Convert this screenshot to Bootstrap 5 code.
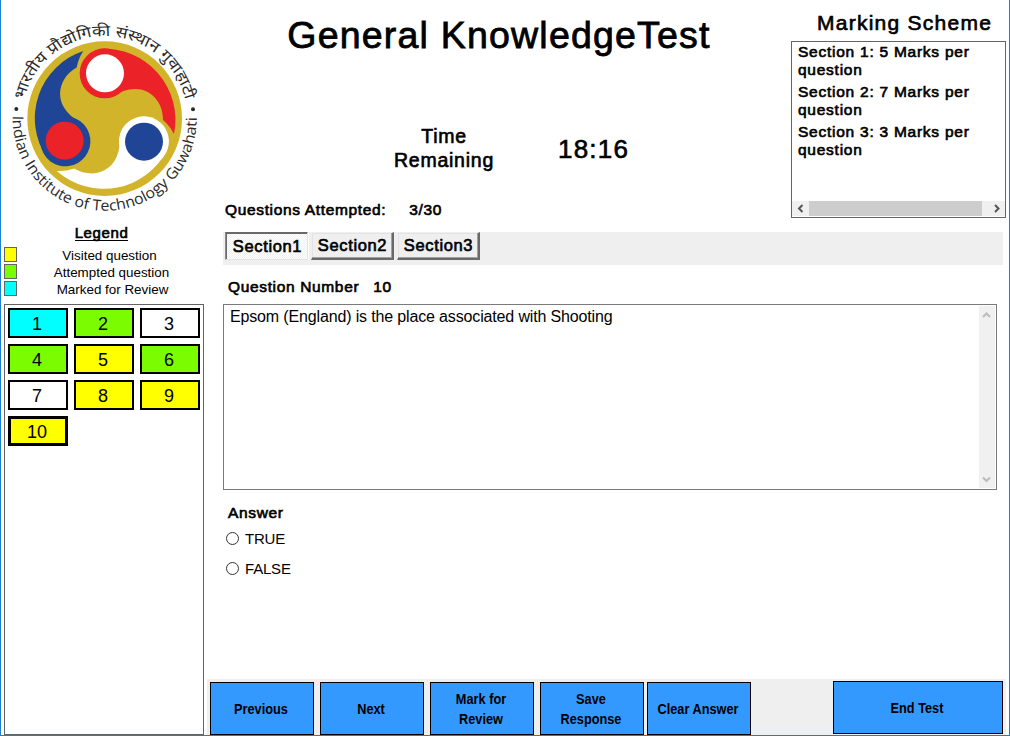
<!DOCTYPE html>
<html lang="en">
<head>
<meta charset="utf-8">
<title>General Knowledge Test</title>
<link href="https://cdn.jsdelivr.net/npm/bootstrap@5.3.0/dist/css/bootstrap.min.css" rel="stylesheet">
<style>
body{font-family:"Liberation Sans",Arial,sans-serif;color:#000;background:#fff;line-height:1}
.app{width:1010px;height:736px;border:solid #1c7fd0;border-width:0 1px 1px;overflow:hidden}
.side{width:204px;padding-left:3px}
.logo{width:204px;height:220px;margin-left:-3px;display:block}
.strong-ish{-webkit-text-stroke:.65px #000;letter-spacing:.65px}
.legend-title{font-size:15px;line-height:17px;height:27px;padding-top:4px;width:195px;letter-spacing:.6px}
.legend-title span{border-bottom:1px solid #000;height:17px;display:inline-block}
.legend-row{height:15px;margin-bottom:2px;width:200px}
.swatch{width:13px;height:15px;border:1px solid #646464}
.legend-row .txt{font-size:13.4px;padding:2px 0 0 2px}
.y{background:#ff0}.g{background:#7cfc00}.c{background:#0ff}.w{background:#fff}
.palette{border:1px solid #646464;margin-top:6px;height:431px;width:200px;padding:3px}
.palette-grid{display:grid;grid-template-columns:repeat(3,60px);gap:6px}
.q{height:30px;border:2px solid #000;border-radius:0;font-size:18px;padding:1px 2px 0 0;line-height:26px;color:#000}
.q.now{border-width:3px;line-height:24px}
.pane{width:804px}
.exam-title{font-size:37.5px;line-height:40px;height:124px;padding:15px 0 0 2px;letter-spacing:1.2px;-webkit-text-stroke:.8px #000}
.top-left{width:586px;height:232px}
.clock-row{height:77px;padding-left:179px}
.timer-label{font-size:19.5px;line-height:24px;text-align:center;width:120px;letter-spacing:.75px}
.timer{font-size:26px;letter-spacing:1.2px;padding:12px 0 0 54px}
.t15{font-size:15px;line-height:17px}
.t15.strong-ish{font-size:15.5px}
.attempted{gap:23px;padding-left:20px}
.marks{width:215px}
.marks-title{font-size:21px;line-height:24px;padding:11px 0 0 26px;height:41px;letter-spacing:1.25px}
.marks-box{height:177px;border:1px solid #646464}
.marks-list{height:159px;padding:1px 0 0 6px;line-height:18px;font-size:15.5px;letter-spacing:.75px;white-space:nowrap}
.marks-list li{margin-bottom:4px}
.hbar{height:15px;background:#f0f0f0}
.thumb{width:173px;background:#cdcdcd}
.arrow{fill:none;stroke-width:2}
.tabs{margin-left:18px;width:780px;height:33px;background:#efefef;padding-left:2px;gap:3px}
.tab{width:83px;height:28px;border:solid;border-width:1px 2px 2px 1px;border-color:#efefef #696969 #696969 #efefef;box-shadow:inset -1px -1px #a0a0a0,inset 1px 1px #e3e3e3;background:#efefef;font-size:16.5px;line-height:25px;padding:0 0 0 1px;border-radius:0;color:#000;white-space:nowrap}
.tab.on{border-width:1px;border-color:#696969 #e3e3e3 #e3e3e3 #8a8a8a;background:repeating-conic-gradient(#fff 0 25%,#f0f0f0 0 50%) 0 0/2px 2px;box-shadow:inset 1px 1px #696969,1px 0 #fff;padding:1px 0 0 2px}
.qnum{margin:13px 0 9px 23px;gap:14px}
.qbox{margin-left:18px;width:774px;height:186px;border:1px solid #7a7a7a;padding:1px}
.qtext{font-size:16px;line-height:18px;padding:2px 0 0 5px;letter-spacing:-.15px}
.vbar{width:16px;background:#f0f0f0}
.answer{margin:14px 0 0 23px}
.choices{padding-top:2px}
.choice{height:30px;margin-left:21px;gap:6px;letter-spacing:-.2px}
.radio-dot{width:13px;height:13px;border:1px solid #333;border-radius:50%}
.foot{margin-left:2px;width:799px;height:56px;background:#efefef;padding:2px 3px 0;gap:6px}
.act{width:104px;height:53px;background:#39f;border:1px solid #000;border-radius:0;padding:0 2px 0 0;font-weight:700;font-size:14px;line-height:20px;color:#000;margin-top:1px;white-space:nowrap}
.act span{display:block;transform:scaleX(.91)}
.act.clear{margin-left:-3px}
.act.end{width:170px;margin:0 0 0 auto}
</style>
</head>
<body>
<div class="app d-flex">
<aside class="side flex-shrink-0">
<svg class="logo" viewBox="3 0 612 660">
<defs>
<path id="top" d="M66,356 A248,248 0 0 1 562,356"/>
<path id="bot" d="M38.2,346 A276,276 0 1 0 589.8,346"/>
<g id="lobe"><circle cx="314" cy="220" r="75"/><path d="M300,147 A213,213 0 0 1 522,402 Q510,378 489,360 C490,305 450,266 405,267 Q370,268 345,287Z"/></g>
</defs>
<circle cx="314" cy="356" r="232" fill="#d1b42a"/>
<use href="#lobe" fill="#eb2228"/><use href="#lobe" fill="#204597" transform="rotate(-120 314 356)"/><use href="#lobe" fill="#fff" transform="rotate(120 314 356)"/>
<circle cx="315" cy="220" r="57" fill="#fff"/><circle cx="194" cy="422" r="57" fill="#eb2228"/><circle cx="432" cy="425" r="57" fill="#204597"/>
<g fill="#2a2a2a"><circle cx="49" cy="327" r="6"/><circle cx="579" cy="328" r="6"/>
<text font-size="46" font-family="'Noto Sans Devanagari','Noto Sans',sans-serif"><textPath href="#top" startOffset="56" textLength="666" lengthAdjust="spacingAndGlyphs">भारतीय प्रौद्योगिकी संस्थान गुवाहाटी</textPath></text>
<text font-size="45" font-family="'Open Sans',sans-serif"><textPath href="#bot" textLength="881" startOffset="1" lengthAdjust="spacingAndGlyphs">Indian Institute of Technology Guwahati</textPath></text></g>
</svg>
<div class="legend-title text-center strong-ish"><span>Legend</span></div>
<div class="legend-row d-flex"><i class="swatch y"></i><span class="txt flex-fill text-center pe-1">Visited question</span></div>
<div class="legend-row d-flex"><i class="swatch g"></i><span class="txt flex-fill text-center">Attempted question</span></div>
<div class="legend-row d-flex"><i class="swatch c"></i><span class="txt flex-fill text-center ps-1">Marked for Review</span></div>
<div class="palette mt-2"><div class="palette-grid">
<button class="q c">1</button><button class="q g">2</button><button class="q w">3</button><button class="q g">4</button><button class="q y">5</button><button class="q g">6</button><button class="q w">7</button><button class="q y">8</button><button class="q y">9</button><button class="q y now">10</button>
</div></div>
</aside>
<main class="pane d-flex flex-column">
<header class="d-flex">
<div class="top-left">
<h1 class="exam-title text-center m-0 fw-normal">General KnowledgeTest</h1>
<div class="clock-row d-flex strong-ish"><div class="timer-label">Time<br>Remaining</div><div class="timer">18:16</div></div>
<div class="attempted t15 strong-ish d-flex"><span>Questions Attempted:</span><span>3/30</span></div>
</div>
<section class="marks strong-ish"><div class="marks-title">Marking Scheme</div>
<div class="marks-box"><ul class="marks-list list-unstyled m-0"><li>Section 1: 5 Marks per<br>question</li><li>Section 2: 7 Marks per<br>question</li><li>Section 3: 3 Marks per<br>question</li></ul>
<div class="hbar d-flex justify-content-between"><svg class="arrow" width="17" height="15" stroke="#555"><path d="M10.5 4L7 7.5L10.5 11"/></svg><div class="thumb"></div><svg class="arrow" width="23" height="15" stroke="#555"><path d="M13 4L16.500 7.500L13 11"/></svg></div></div></section>
</header>
<nav class="tabs d-flex"><button class="tab on strong-ish">Section1</button><button class="tab strong-ish">Section2</button><button class="tab strong-ish">Section3</button></nav>
<div class="qnum t15 strong-ish d-flex"><span>Question Number</span><span>10</span></div>
<div class="qbox d-flex"><div class="qtext flex-fill">Epsom (England) is the place associated with Shooting</div>
<div class="vbar d-flex flex-column justify-content-between"><svg class="arrow" width="16" height="17" stroke="#bbb"><path d="M4 11L7.500 7.500L11 11"/></svg><svg class="arrow" width="16" height="17" stroke="#bbb"><path d="M4 6.500L7.500 10L11 6.500"/></svg></div></div>
<div class="answer t15 strong-ish">Answer</div>
<div class="choices"><div class="choice t15 d-flex align-items-center"><i class="radio-dot"></i>TRUE</div>
<div class="choice t15 d-flex align-items-center"><i class="radio-dot"></i>FALSE</div></div>
<footer class="foot d-flex mt-auto"><button class="act"><span>Previous</span></button><button class="act"><span>Next</span></button><button class="act"><span>Mark for<br>Review</span></button><button class="act"><span>Save<br>Response</span></button><button class="act clear"><span>Clear Answer</span></button><button class="act end"><span>End Test</span></button></footer>
</main>
</div>
<script src="https://cdn.jsdelivr.net/npm/bootstrap@5.3.0/dist/js/bootstrap.bundle.min.js"></script>
</body>
</html>
